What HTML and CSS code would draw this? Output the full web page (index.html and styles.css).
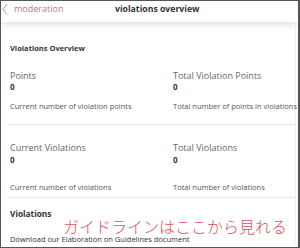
FILE: index.html
```html
<!DOCTYPE html>
<html lang="en">
<head>
    <meta charset="UTF-8">
    <meta name="viewport" content="width=device-width, initial-scale=1.0">
    <title>violations overview</title>
    <link rel="stylesheet" href="styles.css">
</head>
<body>
    <div class="frame">
        <header class="topbar">
            <a class="back" href="#">
                <svg class="back-icon" width="6" height="11" viewBox="0 0 6 11">
                    <path d="M5 0.5 L1 5.5 L5 10.5" fill="none" stroke="#b9909a" stroke-width="1"/>
                </svg>
                <span>moderation</span>
            </a>
            <h1 class="title">violations overview</h1>
        </header>

        <main class="content">
            <h2 class="section-title">Violations Overview</h2>

            <div class="stats stats-points">
                <div class="stat">
                    <div class="stat-label">Points</div>
                    <div class="stat-value">0</div>
                    <div class="stat-desc">Current number of violation points</div>
                </div>
                <div class="stat">
                    <div class="stat-label">Total Violation Points</div>
                    <div class="stat-value">0</div>
                    <div class="stat-desc">Total number of points in violations</div>
                </div>
            </div>

            <div class="stats stats-count">
                <div class="stat">
                    <div class="stat-label">Current Violations</div>
                    <div class="stat-value">0</div>
                    <div class="stat-desc">Current number of violations</div>
                </div>
                <div class="stat">
                    <div class="stat-label">Total Violations</div>
                    <div class="stat-value">0</div>
                    <div class="stat-desc">Total number of violations</div>
                </div>
            </div>

            <div class="violations">
                <h3 class="violations-title">Violations</h3>
                <a class="download" href="#">Download our Elaboration on Guidelines document</a>
            </div>
        </main>

        <div class="note">ガイドラインはここから見れる</div>
    </div>
</body>
</html>
```

FILE: styles.css
```css
/* Global */
body {
    margin: 0;
    font-family: 'Open Sans', 'Liberation Sans', sans-serif;
    color: #333;
    background-color: #fff;
}

.frame {
    position: relative;
    width: 300px;
    height: 248px;
    box-sizing: border-box;
    border: 1px solid #555;
    border-right-width: 2px;
    overflow: hidden;
    background-color: #fff;
}

/* Top bar */
.topbar {
    position: relative;
    display: flex;
    align-items: flex-start;
    height: 21px;
    box-sizing: border-box;
    padding-top: 2px;
    background-color: #fff;
    box-shadow: 0 3px 6px rgba(0, 0, 0, 0.12);
    z-index: 1;
}

.back {
    display: flex;
    align-items: center;
    gap: 6px;
    padding-left: 1px;
    color: #b07a88;
    font-size: 9px;
    line-height: 12px;
    text-decoration: none;
}

.title {
    position: absolute;
    left: 114px;
    top: 2px;
    margin: 0;
    font-size: 8.7px;
    line-height: 12px;
    font-weight: 700;
    color: #333;
}

/* Content */
.content {
    margin-top: 4px;
    margin-right: 2px;
    border-right: 1px solid #f0f0f0;
    padding-top: 17px;
}

.section-title {
    margin: 0 0 0 9px;
    font-size: 7.5px;
    line-height: 10px;
    font-weight: 700;
    color: #333;
}

.stats {
    display: grid;
    grid-template-columns: 163px 1fr;
    margin-left: 6px;
    padding: 17px 0 13px 3px;
    border-bottom: 1px solid #e9e9e9;
    white-space: nowrap;
}

.stat-label {
    font-size: 9px;
    line-height: 12px;
    color: #666;
}

.stat-value {
    font-size: 8px;
    line-height: 10px;
    font-weight: 700;
    color: #333;
}

.stat-desc {
    margin-top: 9px;
    font-size: 7.5px;
    line-height: 10px;
    color: #555;
}

.stats-count {
    padding-bottom: 5px;
}

.stats-count .stat-value {
    margin-top: 1px;
}

.stats-count .stat-desc {
    margin-top: 17px;
}

.violations {
    padding: 10px 0 0 9px;
}

.violations-title {
    margin: 0;
    font-size: 8.3px;
    line-height: 11px;
    font-weight: 700;
    color: #333;
}

.download {
    display: block;
    margin-top: 15px;
    font-size: 7.5px;
    line-height: 10px;
    color: #333;
    text-decoration: none;
    white-space: nowrap;
}

/* Annotation overlay */
.note {
    position: absolute;
    left: 62px;
    top: 217px;
    font-family: 'Noto Sans CJK JP', sans-serif;
    font-weight: 300;
    font-size: 16px;
    line-height: 16px;
    color: #e0505e;
}
```
